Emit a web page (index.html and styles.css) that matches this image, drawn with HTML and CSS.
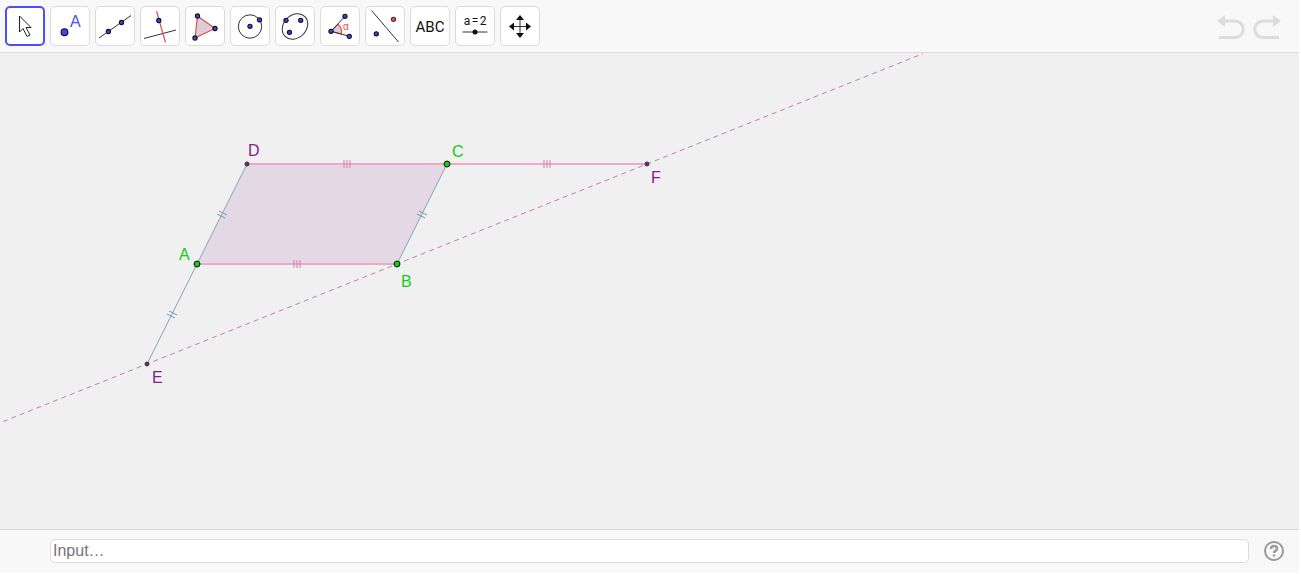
FILE: index.html
```html
<!DOCTYPE html>
<html lang="en">
<head>
<meta charset="utf-8">
<title>Geometry</title>
<link rel="stylesheet" href="styles.css">
</head>
<body>
<div class="app">
  <header class="toolbar">
    <div class="tools">
      <button class="tool selected" aria-label="Move"><svg viewBox="0 0 38 38"><path class="cursor" d="M13.500 9v16l3.500-3.500 4 8 3-1.500-4-7.500h5z"/></svg></button>
      <button class="tool" aria-label="Point"><svg viewBox="0 0 38 38"><circle class="dot" cx="13.500" cy="25.200" r="3.400"/><text class="letter" x="19" y="20">A</text></svg></button>
      <button class="tool" aria-label="Line"><svg viewBox="0 0 38 38"><path class="line" d="M3 31L35 8.500"/><circle class="dot" cx="12.400" cy="24.500" r="2.100"/><circle class="dot" cx="25.500" cy="15.500" r="2.100"/></svg></button>
      <button class="tool" aria-label="Perpendicular line"><svg viewBox="0 0 38 38"><path class="line" d="M3 31.500l32-8.500"/><path class="red" d="M15.500 4l9 31.500"/><circle class="dot" cx="17.800" cy="13.500" r="2.100"/></svg></button>
      <button class="tool" aria-label="Polygon"><svg viewBox="0 0 38 38"><path class="red filled" d="M11.500 9L29 21.500 9 31z"/><circle class="dot" cx="11.500" cy="9" r="2.100"/><circle class="dot" cx="29" cy="21.500" r="2.100"/><circle class="dot" cx="9" cy="31" r="2.100"/></svg></button>
      <button class="tool" aria-label="Circle"><svg viewBox="0 0 38 38"><circle class="line" cx="19" cy="19.500" r="11.700"/><circle class="dot" cx="19" cy="19.300" r="2.100"/><circle class="dot" cx="28.500" cy="12.800" r="2.100"/></svg></button>
      <button class="tool" aria-label="Ellipse"><svg viewBox="0 0 38 38"><ellipse class="line" cx="19" cy="19.500" rx="14" ry="11.300" transform="rotate(-45 19 19.500)"/><circle class="dot" cx="10" cy="13.300" r="2.100"/><circle class="dot" cx="24.700" cy="13.300" r="2.100"/><circle class="dot" cx="13.500" cy="25.300" r="2.100"/></svg></button>
      <button class="tool" aria-label="Angle"><svg viewBox="0 0 38 38"><path class="red filled" d="M10 24.300l7-7q4.500 4 3.500 9.700z"/><path class="line" d="M24 9.300L10 24.300l18.300 5"/><circle class="dot" cx="24" cy="9.300" r="2.100"/><circle class="dot" cx="10" cy="24.300" r="2.100"/><circle class="dot" cx="28.300" cy="29.300" r="2.100"/><text class="alpha" x="22" y="23">α</text></svg></button>
      <button class="tool" aria-label="Reflection"><svg viewBox="0 0 38 38"><path class="line" d="M5.500 3.500L32.500 35"/><circle class="dot reddot" cx="27.500" cy="12.300" r="2.100"/><circle class="dot" cx="10.300" cy="26.800" r="2.100"/></svg></button>
      <button class="tool" aria-label="Text"><svg viewBox="0 0 38 38"><text class="abc" x="19" y="25">ABC</text></svg></button>
      <button class="tool" aria-label="Slider"><svg viewBox="0 0 38 38"><text class="eq" text-anchor="middle"><tspan x="11" y="18">a</tspan><tspan x="19" y="18">=</tspan><tspan x="27" y="18">2</tspan></text><path class="line" d="M6.500 25h25"/><circle class="ink" cx="19" cy="25" r="2.500"/></svg></button>
      <button class="tool" aria-label="Move graphics view"><svg viewBox="0 0 38 38"><path class="line" d="M19 11v17M11 19.500h16"/><path class="ink" d="M19 8l4 5h-8zM19 31l-4-5h8zM8 19.500l5-4v8zM30 19.500l-5 4v-8z"/></svg></button>
    </div>
    <div class="history">
      <button aria-label="Undo"><svg viewBox="0 0 28 26"><path d="M8 8h10a8.250 8.250 0 0 1 0 16.500H2"/><path class="head" d="M0 8l8-6v12z"/></svg></button>
      <button aria-label="Redo"><svg viewBox="0 0 28 26"><path d="M20 8h-10a8.250 8.250 0 0 0 0 16.500h16"/><path class="head" d="M28 8l-8-6v12z"/></svg></button>
    </div>
  </header>
  <main class="view">
    <svg class="drawing" role="img" aria-label="Parallelogram ABCD with points E, B and F on a line">
      <path class="area" d="M197 211l50-100h200l-50 100z"/>
      <path class="dashed" d="M3 368.600L923 0.600"/>
      <path class="pink" d="M247 111H647M197 211H397"/>
      <path class="blue" d="M247 111L147 311M447 111l-50 100"/>
      <path class="pink-tick" d="M344 107v8M347 107v8M350 107v8M544 107v8M547 107v8M550 107v8M294 207v8M297 207v8M300 207v8"/>
      <path class="blue-tick" d="M219 158l8 4M217 161l8 4M419 158l8 4M417 161l8 4M169 258l8 4M167 261l8 4"/>
      <g class="free"><circle cx="197" cy="211" r="3"/><circle cx="397" cy="211" r="3"/><circle cx="447" cy="111" r="3"/></g>
      <g class="derived"><circle cx="247" cy="111" r="2"/><circle cx="647" cy="111" r="2"/><circle cx="147" cy="311" r="2"/></g>
      <g class="free-label"><text x="179" y="207">A</text><text x="401" y="234">B</text><text x="452" y="104">C</text></g>
      <g class="derived-label"><text x="248" y="103">D</text><text x="651" y="130">F</text><text x="152" y="330">E</text></g>
    </svg>
  </main>
  <footer class="inputbar">
    <input class="command" type="text" placeholder="Input…" aria-label="Input">
    <button class="help" aria-label="Help"><svg viewBox="0 0 22 22"><circle cx="11" cy="11" r="9"/><path class="mark" d="M8 9q0-3 3-3t3 2.500q0 1.500-1.500 2.300Q11 11.500 11 13M11 14.500v2"/></svg></button>
  </footer>
</div>
</body>
</html>
```
FILE: styles.css
```css
* { box-sizing: border-box; }
body {
  margin: 0;
  background: #fff;
  font-family: "Liberation Sans", Arial, sans-serif;
}
.app {
  display: flex;
  flex-direction: column;
  height: 100vh;
  padding: 0 2px 1px 0;
}
button {
  padding: 0;
  border: 0;
  background: none;
}
svg { display: block; }
.toolbar {
  display: flex;
  justify-content: space-between;
  align-items: center;
  padding: 6px 18px 6px 5px;
  background: #f8f8f8;
  border-bottom: 1px solid #dcdcdc;
}
.tools { display: flex; gap: 5px; }
.tool {
  width: 40px;
  height: 40px;
  border: 1px solid #dcdcdc;
  border-radius: 5px;
  background: #fff;
}
.tool svg { width: 38px; height: 38px; }
.tool.selected { border: 2px solid #4d4dff; }
.tool.selected svg { margin: -1px; }
.cursor { fill: #fff; stroke: #222; }
.line { fill: none; stroke: #333; }
.red { fill: none; stroke: #db5151; stroke-width: 1.200; }
.filled { fill: #dccdd6; }
.dot { fill: #4040ff; stroke: #111; stroke-width: 1.100; }
.reddot { fill: #db6161; stroke: #622; }
.ink { fill: #111; }
.letter { fill: #4d4dff; font-size: 16px; }
.alpha { fill: #db5151; font-size: 10px; }
.abc, .eq { fill: #111; text-anchor: middle; font-family: Roboto, sans-serif; }
.abc { font-size: 15px; }
.eq { font-size: 12px; }
.history { display: flex; gap: 8px; }
.history svg {
  width: 28px;
  height: 26px;
  fill: none;
  stroke: #dcdcdc;
  stroke-width: 3;
}
.history .head { fill: #dcdcdc; stroke: none; }
.view { flex: 1; min-height: 0; background: #f0f0f0; }
.drawing { width: 100%; height: 100%; fill: none; font-size: 16px; }
.area { fill: #993399; fill-opacity: 0.120; }
.dashed { stroke: #bb7fb3; stroke-dasharray: 5 4; }
.pink { stroke: #e8abc8; stroke-width: 2; }
.blue { stroke: #80a5c5; }
.pink-tick { stroke: #d97bab; }
.blue-tick { stroke: #7595b3; }
.free { fill: #14cc14; stroke: #111; stroke-width: 1; }
.derived { fill: #802080; stroke: #333; }
.free-label { fill: #14cc14; }
.derived-label { fill: #881c88; }
.inputbar {
  display: flex;
  align-items: center;
  gap: 14px;
  padding: 9px 14px 10px 50px;
  background: #f8f8f8;
  border-top: 1px solid #dcdcdc;
}
.command {
  flex: 1;
  min-width: 0;
  height: 24px;
  padding: 0 2px;
  border: 1px solid #dcdcdc;
  border-radius: 5px;
  background: #fff;
  color: #333;
  font: 16px "Liberation Sans", Arial, sans-serif;
}
.command::placeholder { color: #757575; opacity: 1; }
.help svg {
  width: 22px;
  height: 22px;
  fill: none;
  stroke: #999;
  stroke-width: 2;
}
.help .mark { stroke-width: 2.500; }
```
